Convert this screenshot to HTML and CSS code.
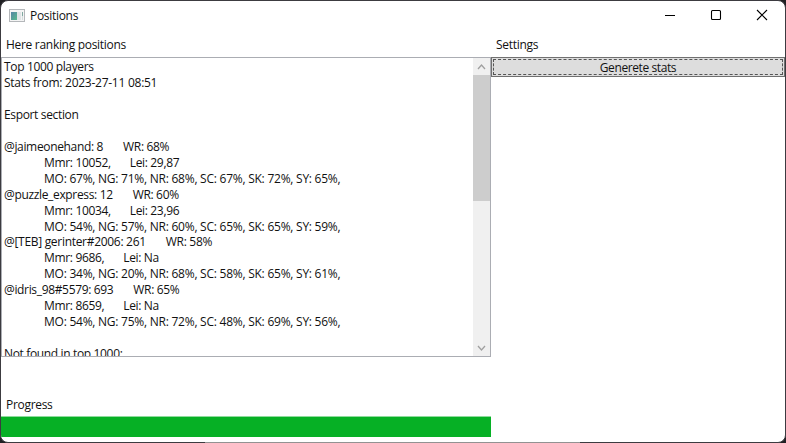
FILE: index.html
```html
<!DOCTYPE html>
<html lang="en">
<head>
<meta charset="utf-8">
<title>Positions</title>
<link rel="stylesheet" href="styles.css">
</head>
<body>
<div class="window">
  <header class="titlebar">
    <svg class="app-icon" width="16" height="14" viewBox="0 0 16 14">
      <defs><linearGradient id="pane" x1="0" y1="0" x2="1" y2="1"><stop offset="0" stop-color="#5585a5"/><stop offset="1" stop-color="#58b98c"/></linearGradient></defs>
      <rect x=".5" y=".5" width="15" height="12" fill="#f4f4f4" stroke="#b4b7ba"/>
      <rect x="2" y="3" width="6" height="8" fill="url(#pane)"/>
      <rect x="8" y="3" width="4" height="8" fill="#dfe4e6"/>
      <rect x="13" y="3" width="1" height="4" fill="#7fa8a0"/>
      <rect x="13" y="7" width="1" height="4" fill="#d5dddd"/>
    </svg>
    <h1 class="title">Positions</h1>
    <div class="controls">
      <svg width="46" height="30"><path d="M18 14.5h10" stroke="#000"/></svg>
      <svg width="46" height="30"><rect x="18.5" y="9.5" width="9" height="9" rx="1" fill="none" stroke="#000" stroke-width="1.1"/></svg>
      <svg width="46" height="30"><path d="M18 9l10 10M28 9L18 19" stroke="#000" stroke-width="1.1"/></svg>
    </div>
  </header>
  <main class="content">
    <section class="left">
      <h2 class="label">Here ranking positions</h2>
      <div class="textbox">
        <div class="lines">
          <p class="head">Top 1000 players</p>
          <p class="date">Stats from: 2023-27-11 08:51</p>
          <p></p>
          <p class="head">Esport section</p>
          <p></p>
          <p class="user"><span>@jaimeonehand: 8</span><span>WR: 68%</span></p>
          <p class="mmr"><span>Mmr: 10052,</span><span>Lei: 29,87</span></p>
          <p class="stats">MO: 67%, NG: 71%, NR: 68%, SC: 67%, SK: 72%, SY: 65%,</p>
          <p class="user"><span>@puzzle_express: 12</span><span>WR: 60%</span></p>
          <p class="mmr"><span>Mmr: 10034,</span><span>Lei: 23,96</span></p>
          <p class="stats">MO: 54%, NG: 57%, NR: 60%, SC: 65%, SK: 65%, SY: 59%,</p>
          <p class="user"><span>@[TEB] gerinter#2006: 261</span><span>WR: 58%</span></p>
          <p class="mmr"><span>Mmr: 9686,</span><span>Lei: Na</span></p>
          <p class="stats">MO: 34%, NG: 20%, NR: 68%, SC: 58%, SK: 65%, SY: 61%,</p>
          <p class="user"><span>@idris_98#5579: 693</span><span>WR: 65%</span></p>
          <p class="mmr"><span>Mmr: 8659,</span><span>Lei: Na</span></p>
          <p class="stats">MO: 54%, NG: 75%, NR: 72%, SC: 48%, SK: 69%, SY: 56%,</p>
          <p></p>
          <p class="head">Not found in top 1000:</p>
        </div>
        <div class="scrollbar">
          <svg width="17" height="17"><path d="M5 11l3.5-4 3.5 4" fill="none" stroke="#a0a0a0" stroke-width="1.3"/></svg>
          <div class="thumb"></div>
          <svg class="down" width="17" height="17"><path d="M5 7l3.5 4 3.5-4" fill="none" stroke="#a0a0a0" stroke-width="1.3"/></svg>
        </div>
      </div>
      <h2 class="label progress-label">Progress</h2>
      <div class="progress"></div>
    </section>
    <section class="right">
      <h2 class="label">Settings</h2>
      <button class="button"><span>Generete stats</span></button>
    </section>
  </main>
</div>
<div class="edge"></div>
</body>
</html>
```

FILE: styles.css
```css
* { box-sizing: border-box; }
body {
  margin: 0;
  height: 443px;
  overflow: hidden;
  background: #202023;
  font: 12px/16px "Open Sans", "Noto Sans", sans-serif;
  letter-spacing: -0.3px;
  color: #111;
}
h1, h2, p { margin: 0; font: inherit; }
.window {
  height: 443px;
  border: 1px solid #3c3b40;
  border-radius: 8px;
  background: #fff;
  overflow: hidden;
}
.edge {
  position: absolute;
  left: 205px;
  bottom: 0;
  width: 375px;
  height: 1px;
  background: #929292;
}
.titlebar { display: flex; align-items: center; height: 30px; padding-left: 8px; }
.app-icon { margin-right: 5px; }
.controls { display: flex; margin-left: auto; }
.content { display: flex; }
.left { width: 490px; }
.right { flex: 1; }
.label { height: 26px; padding: 6px 5px 0; }
.textbox {
  display: flex;
  height: 300px;
  border: 1px solid #abadb3;
  overflow: hidden;
}
.lines { flex: 1; padding: 1px 0 0 2px; line-height: 16px; white-space: nowrap; }
.lines p { display: flex; gap: 20px; height: 15.96px; }
.lines .date { letter-spacing: -0.26px; }
.lines .head { letter-spacing: -0.35px; }
.lines .user, .lines .mmr { letter-spacing: -0.34px; }
.lines .user:nth-child(12) { letter-spacing: -0.3px; }
.lines .stats { letter-spacing: -0.245px; }
.lines .mmr, .lines .stats { padding-left: 40px; }
.lines .mmr { gap: 19px; }
.scrollbar { display: flex; flex-direction: column; width: 17px; background: #f0f0f0; }
.thumb { height: 126px; background: #cdcdcd; }
.down { margin-top: auto; }
.progress-label { height: 59px; padding-top: 40px; }
.progress { height: 21px; background: #06b025; border-top: 1px solid #8fdb9c; }
.button {
  display: block;
  width: 100%;
  height: 20px;
  padding: 1px;
  border: 1px solid #707070;
  background: #ddd;
  font: inherit;
  letter-spacing: -0.4px;
  color: inherit;
}
.button span { display: block; height: 16px; line-height: 15px; border: 1px dashed #555; }
```
